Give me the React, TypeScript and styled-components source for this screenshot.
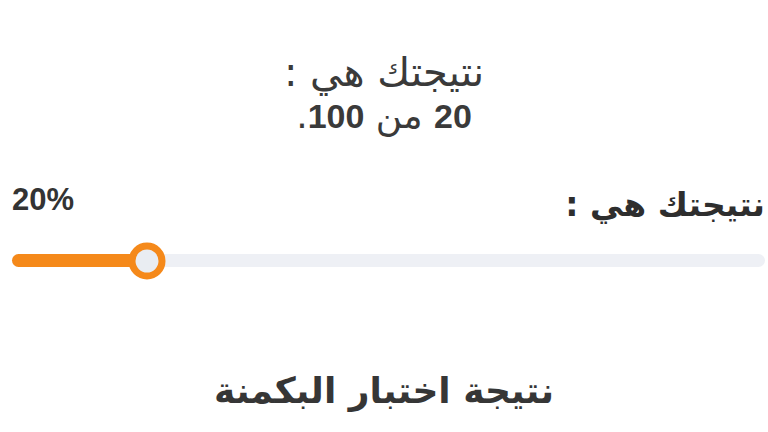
import React from "react";
import styled, { createGlobalStyle } from "styled-components";

const Global = createGlobalStyle`
  html, body { margin: 0; padding: 0; background: #ffffff; }
  body { font-family: "DejaVu Sans", "Noto Sans", sans-serif; color: #333; }
`;

const Page = styled.div`
  width: 768px;
  height: 432px;
  display: flex;
  flex-direction: column;
  background: #fff;
  overflow: hidden;
`;

const Summary = styled.div`
  direction: rtl;
  display: flex;
  flex-direction: column;
  align-items: center;
  padding-top: 50px;
  color: #3a3a3a;
`;

const Line = styled.div<{ $size: number }>`
  font-size: ${(p) => p.$size}px;
  line-height: 44px;
  height: 44px;
`;

const Num = styled.span`
  font-family: "Liberation Sans", Arial, sans-serif;
  font-weight: 700;
  font-size: 34px;
`;

const SliderBlock = styled.div`
  display: flex;
  flex-direction: column;
  padding: 0 3px 0 12px;
  margin-top: 41px;
`;

const LabelRow = styled.div`
  display: flex;
  justify-content: space-between;
  align-items: center;
  height: 50px;
`;

const Percent = styled.span`
  font-family: "Liberation Sans", Arial, sans-serif;
  font-weight: 700;
  font-size: 31px;
  color: #333;
  margin-top: -8px;
`;

const Label = styled.span`
  direction: rtl;
  font-weight: 700;
  font-size: 33px;
  color: #2e2e2e;
`;

const Track = styled.div`
  position: relative;
  margin-top: 25px;
  height: 13px;
  border-radius: 7px;
  background: #eef0f5;
`;

const Fill = styled.div`
  height: 100%;
  border-radius: 7px;
  background: #f5891a;
`;

const Thumb = styled.div`
  position: absolute;
  top: 50%;
  width: 23px;
  height: 23px;
  border: 7px solid #f5891a;
  border-radius: 50%;
  background: #e9edf2;
  transform: translate(-50%, -50%);
`;

const Title = styled.h1`
  direction: rtl;
  margin: 102px 0 0;
  text-align: center;
  font-size: 36px;
  line-height: 44px;
  font-weight: 700;
  color: #363636;
`;

export default function App() {
  const value = 20;
  const fillWidth = 135;
  return (
    <Page>
      <Global />
      <Summary>
        <Line $size={40}>نتيجتك هي :</Line>
        <Line $size={36}>
          <Num>20</Num> من <Num>100</Num>.
        </Line>
      </Summary>
      <SliderBlock>
        <LabelRow>
          <Percent>{value}%</Percent>
          <Label>نتيجتك هي :</Label>
        </LabelRow>
        <Track>
          <Fill style={{ width: fillWidth }} />
          <Thumb style={{ left: fillWidth }} />
        </Track>
      </SliderBlock>
      <Title>نتيجة اختبار البكمنة</Title>
    </Page>
  );
}
